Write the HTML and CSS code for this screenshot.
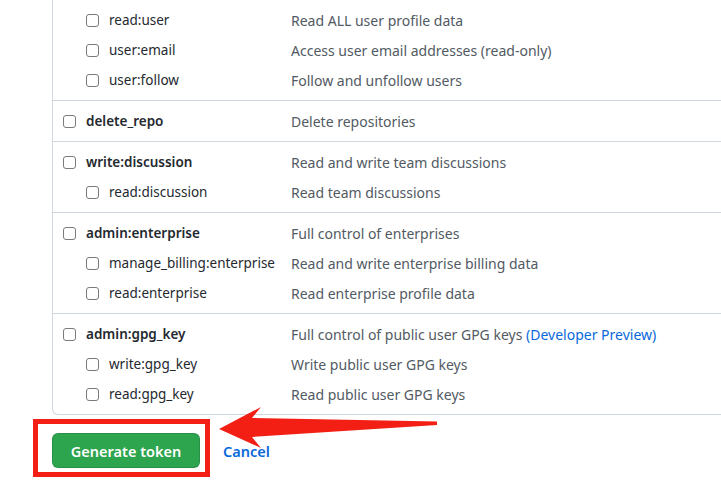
FILE: index.html
```html
<!DOCTYPE html>
<html lang="en">
<head>
<meta charset="utf-8">
<title>New personal access token</title>
<link rel="stylesheet" href="styles.css">
</head>
<body>
<div class="page">
  <div class="scopes">
    <div class="group">
      <div class="row child"><label class="name"><input type="checkbox"><span>read:user</span></label><span class="desc">Read ALL user profile data</span></div>
      <div class="row child"><label class="name"><input type="checkbox"><span>user:email</span></label><span class="desc">Access user email addresses (read-only)</span></div>
      <div class="row child"><label class="name"><input type="checkbox"><span>user:follow</span></label><span class="desc">Follow and unfollow users</span></div>
    </div>
    <div class="group">
      <div class="row parent"><label class="name"><input type="checkbox"><span>delete_repo</span></label><span class="desc">Delete repositories</span></div>
    </div>
    <div class="group">
      <div class="row parent"><label class="name"><input type="checkbox"><span>write:discussion</span></label><span class="desc">Read and write team discussions</span></div>
      <div class="row child"><label class="name"><input type="checkbox"><span>read:discussion</span></label><span class="desc">Read team discussions</span></div>
    </div>
    <div class="group">
      <div class="row parent"><label class="name"><input type="checkbox"><span>admin:enterprise</span></label><span class="desc">Full control of enterprises</span></div>
      <div class="row child"><label class="name"><input type="checkbox"><span>manage_billing:enterprise</span></label><span class="desc">Read and write enterprise billing data</span></div>
      <div class="row child"><label class="name"><input type="checkbox"><span>read:enterprise</span></label><span class="desc">Read enterprise profile data</span></div>
    </div>
    <div class="group">
      <div class="row parent"><label class="name"><input type="checkbox"><span>admin:gpg_key</span></label><span class="desc">Full control of public user GPG keys <a class="link" href="#">(Developer Preview)</a></span></div>
      <div class="row child"><label class="name"><input type="checkbox"><span>write:gpg_key</span></label><span class="desc">Write public user GPG keys</span></div>
      <div class="row child"><label class="name"><input type="checkbox"><span>read:gpg_key</span></label><span class="desc">Read public user GPG keys</span></div>
    </div>
  </div>
  <div class="actions">
    <button class="btn-primary" type="button">Generate token</button>
    <a class="cancel" href="#">Cancel</a>
  </div>
</div>
<div class="highlight"></div>
<svg class="arrow" width="230" height="50" viewBox="210 402 230 50" xmlns="http://www.w3.org/2000/svg">
  <polygon points="219,429 261,407 252,418 437,421.5 437,425 252,437 261,448" fill="#f31f15"/>
</svg>
</body>
</html>
```

FILE: styles.css
```css
html, body {
  margin: 0;
  padding: 0;
  overflow: hidden;
  background: #ffffff;
}

body {
  font-family: "Noto Sans", "Liberation Sans", sans-serif;
  font-size: 13.5px;
  color: #24292f;
  position: relative;
  height: 487px;
}

.page {
  padding-left: 52px;
}

.scopes {
  margin-right: -10px;
  border: 1px solid #d0d7de;
  border-top: none;
  border-radius: 0 0 6px 6px;
}

.group {
  padding: 5px 0;
  border-top: 1px solid #d0d7de;
}

.group:first-child {
  border-top: none;
}

.row {
  display: flex;
  align-items: center;
  height: 30px;
  padding-left: 10px;
}

.row.child {
  padding-left: 33px;
}

.name {
  display: flex;
  align-items: center;
  gap: 10px;
  width: 228px;
  flex-shrink: 0;
}

.row.child .name {
  width: 205px;
}

.row.parent .name span {
  font-weight: 600;
}

.name input {
  appearance: none;
  -webkit-appearance: none;
  margin: 0;
  width: 13px;
  height: 13px;
  border: 1px solid #7a7a7a;
  border-radius: 3px;
  background: #fff;
  flex-shrink: 0;
}

.desc {
  color: #525a63;
  font-size: 14px;
}

.link {
  color: #0969da;
  text-decoration: none;
}

.actions {
  display: flex;
  align-items: center;
  margin-top: 18px;
}

.btn-primary {
  width: 148px;
  height: 35px;
  border: 1px solid rgba(27, 31, 36, 0.15);
  border-radius: 6px;
  background: #2da44e;
  color: #ffffff;
  font-family: "Noto Sans", "Liberation Sans", sans-serif;
  font-size: 14.5px;
  font-weight: 600;
  padding: 0;
}

.cancel {
  margin-left: 23px;
  color: #0969da;
  font-weight: 600;
  font-size: 14.5px;
  text-decoration: none;
}

.highlight {
  position: absolute;
  left: 33px;
  top: 419px;
  width: 167px;
  height: 48px;
  border: 5px solid #f31f15;
}

.arrow {
  position: absolute;
  left: 210px;
  top: 402px;
}
```
